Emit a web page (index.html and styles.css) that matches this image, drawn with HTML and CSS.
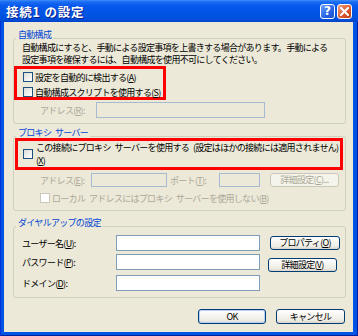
FILE: index.html
```html
<!DOCTYPE html>
<html lang="ja">
<head>
<meta charset="utf-8">
<title>接続1 の設定</title>
<link rel="stylesheet" href="styles.css">
</head>
<body>
<div class="window">
  <div class="titlebar">
    <span class="title">接続1 の設定</span>
    <div class="tbtns">
      <span class="tbtn help">?</span>
      <span class="tbtn close"><svg width="9" height="9" viewBox="0 0 9 9"><path d="M1 1L8 8M8 1L1 8" stroke="#fff" stroke-width="2" stroke-linecap="square"/></svg></span>
    </div>
  </div>
  <div class="client">
    <fieldset class="group g1">
      <legend>自動構成</legend>
      <p class="desc">自動構成にすると、手動による設定事項を上書きする場合があります。手動による<br>設定事項を確保するには、自動構成を使用不可にしてください。</p>
      <div class="mark mark1">
        <label class="chk"><span class="box"></span><span>設定を自動的に検出する(<u>A</u>)</span></label>
        <label class="chk"><span class="box"></span><span>自動構成スクリプトを使用する(<u>S</u>)</span></label>
      </div>
      <div class="row addr1">
        <span class="lbl dis w56">アドレス(<u>R</u>):</span>
        <span class="input dis w169"></span>
      </div>
    </fieldset>

    <fieldset class="group g2">
      <legend>プロキシ&ensp;サーバー</legend>
      <div class="mark mark2">
        <span class="box"></span>
        <span class="txt">この接続にプロキシ&ensp;サーバーを使用する&ensp;(設定はほかの接続には適用されません)<br>(<u>X</u>)</span>
      </div>
      <div class="row addr2">
        <span class="lbl dis w51">アドレス(<u>E</u>):</span>
        <span class="input dis h14 w76"></span>
        <span class="lbl dis w49 ml3">ポート(<u>T</u>):</span>
        <span class="input dis h14 w41"></span>
        <span class="btn dis adv">詳細設定(<u>C</u>)...</span>
      </div>
      <label class="chk dis local"><span class="box dis"></span><span>ローカル&ensp;アドレスにはプロキシ&ensp;サーバーを使用しない(<u>B</u>)</span></label>
    </fieldset>

    <fieldset class="group g3">
      <legend>ダイヤルアップの設定</legend>
      <div class="row dial r1">
        <span class="lbl w94">ユーザー名(<u>U</u>):</span>
        <span class="input w144"></span>
        <span class="btn prop">プロパティ(<u>O</u>)</span>
      </div>
      <div class="row dial r2">
        <span class="lbl w94">パスワード(<u>P</u>):</span>
        <span class="input w144"></span>
        <span class="btn adv2">詳細設定(<u>V</u>)</span>
      </div>
      <div class="row dial r3">
        <span class="lbl w94">ドメイン(<u>D</u>):</span>
        <span class="input w144"></span>
      </div>
    </fieldset>

    <div class="footer">
      <span class="btn ok default">OK</span>
      <span class="btn cancel">キャンセル</span>
    </div>
  </div>
</div>
</body>
</html>
```
FILE: styles.css
```css
body {
  margin: 0;
  font-family: "Noto Sans CJK JP", "Noto Sans", sans-serif;
  font-size: 9px;
  letter-spacing: -0.7px;
  color: #000;
}
.window {
  width: 358px;
  height: 336px;
  background: #0054E3;
  display: flex;
  flex-direction: column;
  box-sizing: border-box;
  overflow: hidden;
  box-shadow: inset 1px 0 #0831D9, inset -1px 0 #001EA0, inset 0 -1px #001EA0;
}
.titlebar {
  height: 22px;
  flex: none;
  display: flex;
  justify-content: space-between;
  padding: 0 6px;
  background: linear-gradient(#3D8DF8 0, #1A6CF4 2px, #0758EC 6px, #0054E3 14px, #0050DC 19px, #0044CA 22px);
}
.title {
  color: #fff;
  font-weight: bold;
  font-size: 12.5px;
  letter-spacing: 0.8px;
  line-height: 22px;
  padding-top: 1px;
  text-shadow: 1px 1px #0A1E8C;
}
.tbtns {
  display: flex;
  gap: 2px;
  margin-top: 4px;
}
.tbtn {
  width: 15px;
  height: 15px;
  box-sizing: border-box;
  border: 1px solid #fff;
  border-radius: 3px;
  display: flex;
  align-items: center;
  justify-content: center;
}
.help {
  background: linear-gradient(135deg, #6FA0F8, #2463E6 60%, #1E50C8);
  color: #fff;
  font: bold 12px "DejaVu Sans", sans-serif;
  letter-spacing: 0;
  line-height: 13px;
}
.close {
  background: linear-gradient(135deg, #F0A080, #DC5A30 55%, #C0401C);
}
.client {
  flex: 1;
  margin: 0 5px 4px 4px;
  background: #ECE9D8;
  padding: 8px 7px 0 9px;
  display: flex;
  flex-direction: column;
}
.group {
  margin: 0;
  padding: 0;
  border: 1px solid #D0D0BF;
  border-radius: 3px;
  min-width: 0;
}
.group legend {
  color: #0046D5;
  line-height: 10px;
  padding: 0 2px 6px;
  margin-left: 2px;
}
.g2 { margin-top: 4px; }
.g3 { margin-top: 7px; }
.desc {
  margin: -4px 0 0 8px;
  line-height: 12px;
  white-space: nowrap;
}
.mark {
  border: 3px solid #F00;
  box-sizing: border-box;
}
.mark1 {
  width: 152px;
  display: flex;
  flex-direction: column;
  gap: 5px;
  padding: 3px 0 0 6px;
}
.chk {
  display: flex;
  align-items: center;
  gap: 2px;
  height: 10px;
  white-space: nowrap;
}
.box {
  flex: none;
  width: 10px;
  height: 10px;
  box-sizing: border-box;
  border: 1px solid #1C5180;
  background: linear-gradient(135deg, #DCDCD7, #FFFFFF);
}
.box.dis {
  border-color: #CAC8BB;
  background: #fff;
}
.dis { color: #ACA899; }
.row {
  display: flex;
  align-items: center;
}
.lbl { flex: none; white-space: nowrap; }
.w56 { width: 56px; }
.w51 { width: 51px; }
.w49 { width: 49px; }
.w94 { width: 94px; }
.ml3 { margin-left: 3px; }
.input {
  flex: none;
  height: 16px;
  box-sizing: border-box;
  border: 1px solid #7F9DB9;
  background: #fff;
}
.input.dis {
  background: #ECE9D8;
  border-color: #A7BACF;
}
.h14 { height: 14px; }
.w169 { width: 169px; }
.w76 { width: 76px; }
.w41 { width: 41px; }
.w144 { width: 144px; }
.addr1 {
  height: 16px;
  margin: 2px 0 5px 26px;
}
.mark2 {
  width: 328px;
  margin: -6px 0 0 1px;
  padding: 0 0 0 5px;
  display: flex;
  align-items: center;
  gap: 3px;
}
.mark2 .txt {
  line-height: 13px;
  white-space: nowrap;
}
.addr2 {
  height: 14px;
  margin: 3px 0 0 26px;
}
.local {
  margin: 6px 0 7px 26px;
}
.btn {
  flex: none;
  box-sizing: border-box;
  border: 1px solid #003C74;
  border-radius: 3px;
  background: linear-gradient(#FFFFFF, #F5F4EF 45%, #ECEBE4 80%, #D8D3C7);
  display: flex;
  align-items: center;
  justify-content: center;
  white-space: nowrap;
  line-height: 10px;
}
.btn.dis {
  border-color: #C9C7BA;
  background: #F5F4EA;
}
.adv {
  width: 69px;
  height: 14px;
  margin-left: 10px;
}
.dial {
  height: 16px;
  margin-left: 8px;
}
.r1 { margin-top: 1px; }
.r2 { margin-top: 3px; }
.r3 { margin-top: 5px; margin-bottom: 6px; }
.prop {
  width: 70px;
  height: 14px;
  margin-left: 10px;
}
.adv2 {
  width: 69px;
  height: 14px;
  margin-left: 8px;
  align-self: flex-start;
  margin-top: 4px;
}
.footer {
  display: flex;
  justify-content: flex-end;
  gap: 10px;
  margin: 11px 1px 0 0;
}
.ok { width: 68px; height: 15px; }
.cancel { width: 69px; height: 15px; }
.default {
  box-shadow: inset 0 0 0 1px #B9D1F6;
}
```
